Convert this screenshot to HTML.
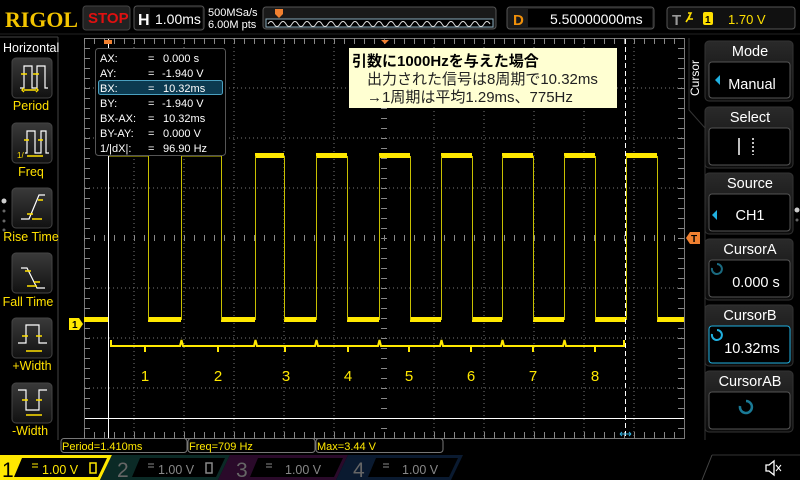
<!DOCTYPE html>
<html><head><meta charset="utf-8"><style>
html,body{margin:0;padding:0;background:#000;width:800px;height:480px;overflow:hidden}
svg{display:block;font-family:"Liberation Sans","Noto Sans CJK JP",sans-serif}
</style></head><body>
<svg width="800" height="480" viewBox="0 0 800 480" xmlns="http://www.w3.org/2000/svg">
<defs>
<linearGradient id="btn" x1="0" y1="0" x2="0" y2="1"><stop offset="0" stop-color="#3a3a3a"/><stop offset="1" stop-color="#111"/></linearGradient>
<linearGradient id="tb" x1="0" y1="0" x2="0" y2="1"><stop offset="0" stop-color="#2a2a2a"/><stop offset="1" stop-color="#0c0c0c"/></linearGradient>
</defs>
<rect width="800" height="480" fill="#000"/>
<!-- top bar -->
<text x="5" y="27" font-family="Liberation Serif,serif" font-weight="bold" font-size="22" fill="#f3c400" textLength="73" lengthAdjust="spacingAndGlyphs">RIGOL</text>
<rect x="83" y="6" width="47" height="24" rx="3" fill="#222" stroke="#444"/>
<text x="88" y="23" font-weight="bold" font-size="15" fill="#e01010">STOP</text>
<rect x="134" y="6" width="70" height="24" rx="3" fill="#111" stroke="#555"/>
<rect x="150" y="8" width="52" height="20" fill="#000"/>
<text x="138" y="25" font-weight="bold" font-size="16" fill="#fff">H</text>
<text x="155" y="24" font-size="14" fill="#fff">1.00ms</text>
<text x="208" y="16" font-size="11" fill="#fff">500MSa/s</text>
<text x="208" y="28" font-size="11" fill="#fff">6.00M pts</text>
<rect x="263" y="7" width="233" height="22" rx="3" fill="#1a1a1a" stroke="#555"/>
<rect x="266" y="19" width="227" height="8" fill="#000" stroke="#8ab"/>
<path d="M268 24 q3 -5 6 0 t6 0 t6 0 t6 0 t6 0 t6 0 t6 0 t6 0 t6 0 t6 0 t6 0 t6 0 t6 0 t6 0 t6 0 t6 0 t6 0 t6 0 t6 0 t6 0 t6 0 t6 0 t6 0 t6 0 t6 0 t6 0 t6 0 t6 0 t6 0 t6 0 t6 0 t6 0 t6 0 t6 0 t6 0 t6 0 t6 0" fill="none" stroke="#ddd" stroke-width="1"/>
<path d="M275 9 h8 v5 l-4 4 l-4 -4z" fill="#f08030"/>
<rect x="507" y="7" width="147" height="22" rx="3" fill="#1a1a1a" stroke="#555"/>
<rect x="528" y="9" width="124" height="18" fill="#000"/>
<text x="513" y="25" font-weight="bold" font-size="15" fill="#f0900a">D</text>
<text x="550" y="24" font-size="14" fill="#fff">5.50000000ms</text>
<rect x="667" y="7" width="128" height="22" rx="3" fill="#111" stroke="#555"/>
<text x="672" y="25" font-weight="bold" font-size="15" fill="#999">T</text>
<path d="M688 13 h3 l-3 6 h5 M690 16 l-4 6" stroke="#ffe000" stroke-width="1.6" fill="none"/>
<rect x="703" y="12" width="10" height="13" rx="2" fill="#ffe000"/>
<text x="705" y="23" font-size="10" font-weight="bold" fill="#000">1</text>
<text x="728" y="24" font-size="13" fill="#ffe000">1.70 V</text>
<line x1="0" y1="34" x2="800" y2="34" stroke="#222"/>

<!-- left panel -->
<line x1="58" y1="37" x2="58" y2="440" stroke="#444"/>
<line x1="0" y1="37" x2="58" y2="37" stroke="#444"/>
<text x="3" y="52" font-size="12.5" fill="#fff">Horizontal</text>
<g fill="url(#btn)" stroke="#444">
<rect x="12" y="58" width="40" height="40" rx="4"/>
<rect x="12" y="123" width="40" height="40" rx="4"/>
<rect x="12" y="188" width="40" height="40" rx="4"/>
<rect x="12" y="253" width="40" height="40" rx="4"/>
<rect x="12" y="318" width="40" height="40" rx="4"/>
<rect x="12" y="383" width="40" height="40" rx="4"/>
</g>
<g stroke="#fff" fill="none" stroke-width="1.2">
<path d="M20 88 h4 v-22 h8 v22 h5 v-22 h8 v22 h3"/>
<path d="M25 153 h2 v-22 h8 v22 h6 v-22 h5 v22 h3"/>
<path d="M21 219 h8 l10 -24 h6"/>
<path d="M21 268 h6 l10 20 h8"/>
<path d="M18 343 h8 v-18 h13 v18 h8"/>
<path d="M18 390 h8 v20 h13 v-20 h8"/>
</g>
<g stroke="#ffe000" stroke-width="1.4" fill="none">
<path d="M21 74h6 M33 74h6 M24 90h12 M24 88l-2 2 2 2 M36 88l2 2-2 2"/>
<path d="M24 140h5 M38 140h5 M27 156h16"/>
<path d="M27 214h6 M38 200h5 M32 219h10"/>
<path d="M25 271h6 M34 282h6 M27 286h10"/>
<path d="M22 336h6 M36 336h6 M26 351h16"/>
<path d="M22 400h6 M36 400h6 M26 415h16"/>
</g>
<text x="17" y="158" font-size="8" fill="#ffe000">1/</text>
<g font-size="12.5" fill="#ffe000" text-anchor="middle">
<text x="31" y="110">Period</text>
<text x="31" y="176">Freq</text>
<text x="31" y="241">Rise Time</text>
<text x="28" y="306">Fall Time</text>
<text x="32" y="370">+Width</text>
<text x="30" y="435">-Width</text>
</g>
<circle cx="4" cy="201" r="2.5" fill="#ccc"/><circle cx="4" cy="211" r="1.5" fill="#666"/><circle cx="4" cy="221" r="1.5" fill="#666"/><circle cx="4" cy="230" r="1.5" fill="#666"/>

<!-- grid -->
<rect x="84.5" y="38.5" width="600" height="400" fill="none" stroke="#777"/>
<g stroke="#777" stroke-dasharray="1 3">
<line x1="134" y1="39" x2="134" y2="438"/><line x1="184" y1="39" x2="184" y2="438"/><line x1="234" y1="39" x2="234" y2="438"/><line x1="284" y1="39" x2="284" y2="438"/><line x1="334" y1="39" x2="334" y2="438"/><line x1="434" y1="39" x2="434" y2="438"/><line x1="484" y1="39" x2="484" y2="438"/><line x1="534" y1="39" x2="534" y2="438"/><line x1="584" y1="39" x2="584" y2="438"/><line x1="634" y1="39" x2="634" y2="438"/>
<line x1="85" y1="88" x2="684" y2="88"/><line x1="85" y1="138" x2="684" y2="138"/><line x1="85" y1="188" x2="684" y2="188"/><line x1="85" y1="288" x2="684" y2="288"/><line x1="85" y1="338" x2="684" y2="338"/><line x1="85" y1="388" x2="684" y2="388"/>
</g>
<g stroke="#888" stroke-dasharray="1 9">
<line x1="84" y1="41" x2="684" y2="41" stroke-width="6"/>
<line x1="84" y1="435" x2="684" y2="435" stroke-width="6"/>
<line x1="84" y1="238" x2="684" y2="238" stroke-width="6"/>
<line x1="87" y1="38" x2="87" y2="438" stroke-width="6"/>
<line x1="681" y1="38" x2="681" y2="438" stroke-width="6"/>
<line x1="384" y1="38" x2="384" y2="438" stroke-width="6"/>
</g>

<!-- waveform -->
<g fill="#ffe800">
<rect x="84" y="317" width="24" height="5"/>
<rect x="148" y="317" width="33" height="5"/>
<rect x="221" y="317" width="34" height="5"/>
<rect x="284" y="317" width="32" height="5"/>
<rect x="347" y="317" width="32" height="5"/>
<rect x="410" y="317" width="31" height="5"/>
<rect x="472" y="317" width="30" height="5"/>
<rect x="533" y="317" width="31" height="5"/>
<rect x="595" y="317" width="31" height="5"/>
<rect x="657" y="317" width="27" height="5"/>
<rect x="255" y="153" width="29" height="5"/>
<rect x="316" y="153" width="31" height="5"/>
<rect x="379" y="153" width="31" height="5"/>
<rect x="441" y="153" width="31" height="5"/>
<rect x="502" y="153" width="31" height="5"/>
<rect x="564" y="153" width="31" height="5"/>
<rect x="626" y="153" width="31" height="5"/>
</g>
<g stroke="#c8c000" fill="none" stroke-width="1">
<path d="M108.5 320 V156 H148.5 V320 M181.5 320 V156 H221.5 V320 M255.5 320 V156 M284.5 156 V320 M316.5 320 V156 M347.5 156 V320 M379.5 320 V156 M410.5 156 V320 M441.5 320 V156 M472.5 156 V320 M502.5 320 V156 M533.5 156 V320 M564.5 320 V156 M595.5 156 V320 M626.5 320 V156 M657.5 156 V320"/>
</g>
<!-- brackets -->
<path d="M111 340 v6 H180 l1.5 -6 l1.5 6 H254 l1.5 -6 l1.5 6 H315 l1.5 -6 l1.5 6 H378 l1.5 -6 l1.5 6 H440 l1.5 -6 l1.5 6 H501 l1.5 -6 l1.5 6 H563 l1.5 -6 l1.5 6 H624 v-6 M145 346 v6 M218 346 v6 M285 346 v6 M348 346 v6 M409 346 v6 M471 346 v6 M533 346 v6 M595 346 v6" fill="none" stroke="#ffe800" stroke-width="2"/>
<g font-size="15" fill="#ffe800" text-anchor="middle">
<text x="145" y="381">1</text><text x="218" y="381">2</text><text x="286" y="381">3</text><text x="348" y="381">4</text><text x="409" y="381">5</text><text x="471" y="381">6</text><text x="533" y="381">7</text><text x="595" y="381">8</text>
</g>
<!-- cursors -->
<line x1="108.5" y1="39" x2="108.5" y2="438" stroke="#fff"/>
<line x1="85" y1="418.5" x2="684" y2="418.5" stroke="#fff"/>
<line x1="625.5" y1="39" x2="625.5" y2="438" stroke="#fff" stroke-dasharray="5 3"/>
<path d="M104 40 h8 v4 h-8z" fill="#f08030"/>
<path d="M381 40 h8 l-4 4z" fill="#f08030"/>
<path d="M620 434 h11 M620 434 l2 -2 M620 434 l2 2 M631 434 l-2 -2 M631 434 l-2 2" stroke="#30b0e0" fill="none"/>
<!-- markers -->
<path d="M69 318 h10 l4 6 l-4 6 h-10z" fill="#ffe800"/>
<text x="72" y="328" font-size="10" font-weight="bold" fill="#000">1</text>
<path d="M700 232 h-10 l-4 6 l4 6 h10z" fill="#f08030"/>
<text x="691" y="242" font-size="10" font-weight="bold" fill="#000">T</text>

<!-- cursor info -->
<rect x="95.5" y="48.5" width="130" height="107" rx="3" fill="#000" stroke="#555"/>
<rect x="98.5" y="80.5" width="124" height="14" rx="2" fill="#0c3a50" stroke="#4aa0c0"/>
<g font-size="11" fill="#fff">
<text x="100" y="62">AX:</text><text x="148" y="62">=</text><text x="163" y="62">0.000 s</text>
<text x="100" y="77">AY:</text><text x="148" y="77">=</text><text x="162" y="77">-1.940 V</text>
<text x="100" y="92">BX:</text><text x="148" y="92">=</text><text x="163" y="92">10.32ms</text>
<text x="100" y="107">BY:</text><text x="148" y="107">=</text><text x="162" y="107">-1.940 V</text>
<text x="100" y="122">BX-AX:</text><text x="148" y="122">=</text><text x="163" y="122">10.32ms</text>
<text x="100" y="137">BY-AY:</text><text x="148" y="137">=</text><text x="163" y="137">0.000 V</text>
<text x="100" y="152">1/|dX|:</text><text x="148" y="152">=</text><text x="163" y="152">96.90 Hz</text>
</g>

<!-- annotation -->
<rect x="349" y="48" width="268" height="60" fill="#ffffd2"/>
<g font-size="15" fill="#000">
<text x="352" y="66" font-weight="bold">引数に1000Hzを与えた場合</text>
<text x="367" y="84" fill="#222">出力された信号は8周期で10.32ms</text>
<text x="367" y="102" fill="#222">→1周期は平均1.29ms、775Hz</text>
</g>

<!-- right panel -->
<path d="M689 38 V110 L705 128 V440" stroke="#333" fill="none"/>
<text transform="translate(699,96) rotate(-90)" font-size="12" fill="#fff">Cursor</text>
<g>
<rect x="705" y="41" width="88" height="60" rx="4" fill="url(#tb)" stroke="#333"/>
<rect x="705" y="107" width="88" height="61" rx="4" fill="url(#tb)" stroke="#333"/>
<rect x="705" y="173" width="88" height="61" rx="4" fill="url(#tb)" stroke="#333"/>
<rect x="705" y="239" width="88" height="61" rx="4" fill="url(#tb)" stroke="#333"/>
<rect x="705" y="305" width="88" height="61" rx="4" fill="url(#tb)" stroke="#333"/>
<rect x="705" y="371" width="88" height="61" rx="4" fill="url(#tb)" stroke="#333"/>
</g>
<g fill="#000" stroke="#555">
<rect x="709" y="62" width="81" height="36" rx="3"/>
<rect x="709" y="128" width="81" height="37" rx="3"/>
<rect x="709" y="194" width="81" height="37" rx="3"/>
<rect x="709" y="260" width="81" height="37" rx="3"/>
<rect x="709" y="326" width="81" height="37" rx="3" stroke="#20b0e0"/>
<rect x="709" y="392" width="81" height="37" rx="3"/>
</g>
<g font-size="14.5" fill="#fff" text-anchor="middle">
<text x="750" y="56">Mode</text>
<text x="750" y="122">Select</text>
<text x="750" y="188">Source</text>
<text x="750" y="254">CursorA</text>
<text x="750" y="320">CursorB</text>
<text x="750" y="386">CursorAB</text>
<text x="752" y="89">Manual</text>
<text x="750" y="220">CH1</text>
<text x="756" y="287">0.000 s</text>
<text x="752" y="353">10.32ms</text>
</g>
<path d="M715 80 l5 -5 v10z" fill="#20b0e0"/>
<path d="M712 215 l5 -5 v10z" fill="#20b0e0"/>
<path d="M739 138 v17" stroke="#fff" stroke-width="1.5"/>
<path d="M753 138 v17" stroke="#fff" stroke-width="1.5" stroke-dasharray="2 2"/>
<path d="M712 268 a5 5 0 1 0 5 -4" stroke="#1a6a80" stroke-width="2" fill="none"/>
<path d="M712 334 a5 5 0 1 0 5 -4" stroke="#20b0e0" stroke-width="2" fill="none"/>
<path d="M740 406 a6 6 0 1 0 6 -5" stroke="#1a7a96" stroke-width="2.5" fill="none"/>
<circle cx="797" cy="210" r="2.5" fill="#ccc"/><circle cx="797" cy="220" r="1.5" fill="#666"/>

<!-- measurements -->
<g fill="#000" stroke="#777">
<rect x="61" y="438.5" width="126" height="14" rx="3"/>
<rect x="188" y="438.5" width="127" height="14" rx="3"/>
<rect x="316" y="438.5" width="127" height="14" rx="3"/>
</g>
<g font-size="11" fill="#ffe800">
<text x="62" y="450">Period=1.410ms</text>
<text x="189" y="450">Freq=709 Hz</text>
<text x="317" y="450">Max=3.44 V</text>
</g>
<!-- channels -->
<path d="M0 455 H112 L100 480 H0z" fill="#ffe800"/>
<path d="M22 458 H107 L98 477 H14z" fill="#000"/>
<text x="2" y="477" font-size="21" fill="#000">1</text>
<path d="M32 464 h6 M32 467 h6" stroke="#ffe800"/>
<text x="42" y="474" font-size="12.5" fill="#ffe800">1.00 V</text>
<rect x="90" y="463" width="6" height="10" fill="none" stroke="#ffe800" stroke-width="1.5"/>
<path d="M112 455 H230 L218 480 H100z" fill="#0b2a26"/>
<path d="M140 458 H225 L216 477 H132z" fill="#000"/>
<text x="117" y="477" font-size="21" fill="#666">2</text>
<path d="M148 464 h6 M148 467 h6" stroke="#888"/>
<text x="158" y="474" font-size="12.5" fill="#888">1.00 V</text>
<rect x="206" y="463" width="6" height="10" fill="none" stroke="#888" stroke-width="1.5"/>
<path d="M230 455 H348 L336 480 H218z" fill="#2a0a2a"/>
<path d="M258 458 H343 L334 477 H250z" fill="#000"/>
<text x="236" y="477" font-size="21" fill="#666">3</text>
<path d="M266 464 h6 M266 467 h6" stroke="#888"/>
<text x="285" y="474" font-size="12.5" fill="#888">1.00 V</text>
<path d="M348 455 H463 L451 480 H336z" fill="#0a1a30"/>
<path d="M376 458 H458 L449 477 H368z" fill="#000"/>
<text x="353" y="477" font-size="21" fill="#666">4</text>
<path d="M383 464 h6 M383 467 h6" stroke="#888"/>
<text x="402" y="474" font-size="12.5" fill="#888">1.00 V</text>
<path d="M712 455 H800" stroke="#333"/>
<path d="M712 455 L702 480" stroke="#444"/>
<path d="M766 465 h3 l5 -4 v14 l-5 -4 h-3z" fill="none" stroke="#fff" stroke-width="1.3"/>
<path d="M776 465 l5 6 M781 465 l-5 6" stroke="#fff"/>
</svg>
</body></html>
